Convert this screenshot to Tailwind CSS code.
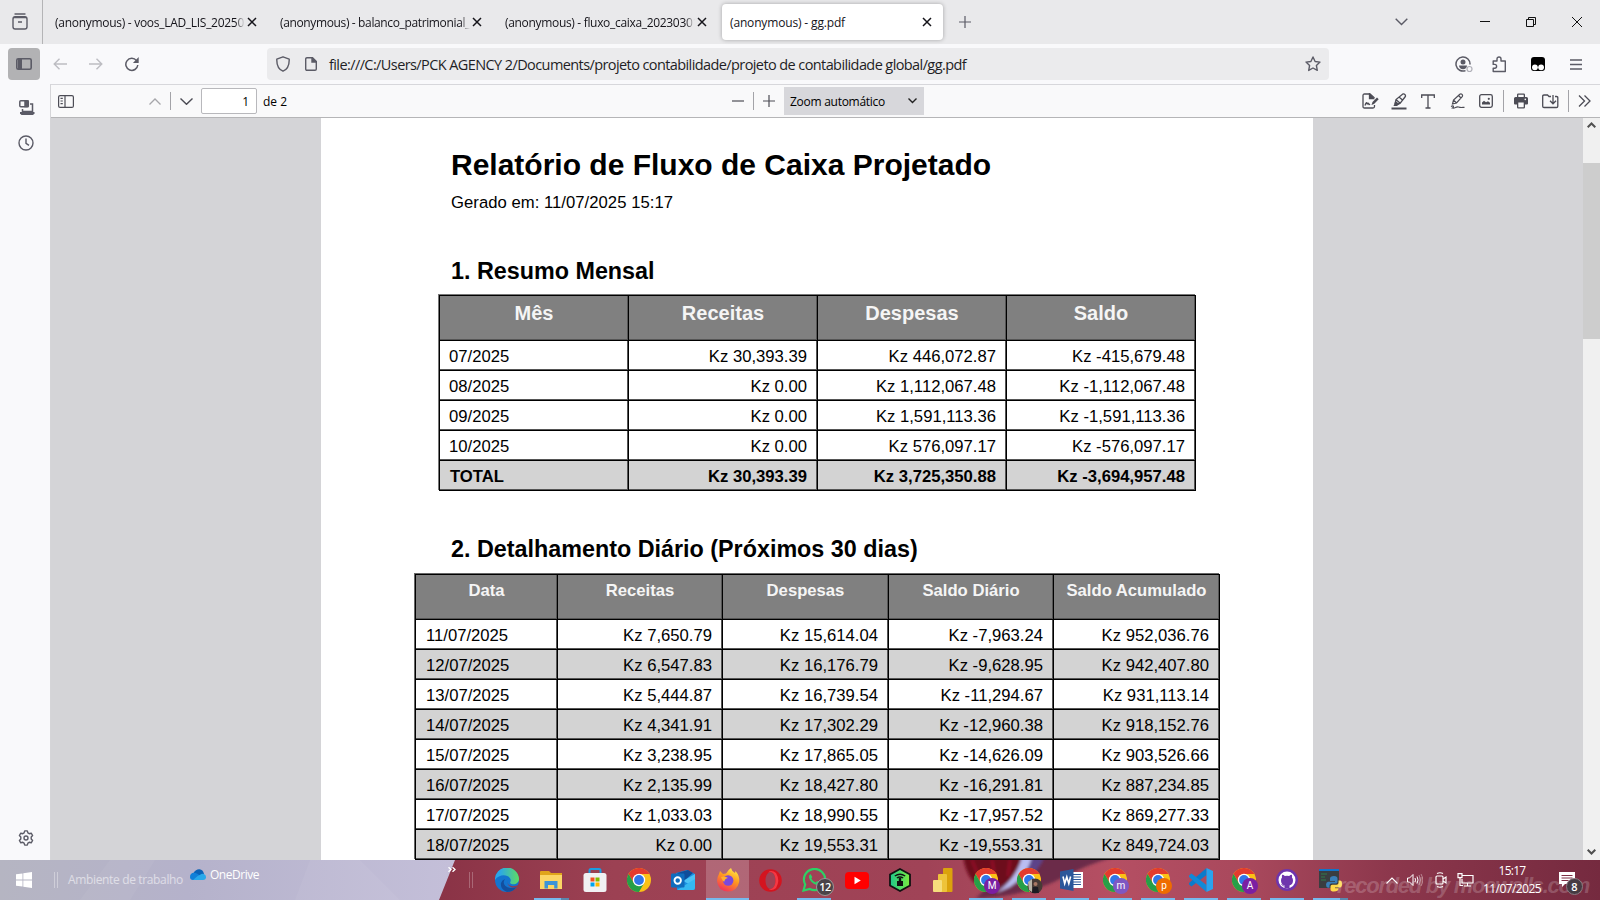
<!DOCTYPE html>
<html lang="pt">
<head>
<meta charset="utf-8">
<title>gg.pdf</title>
<script src="https://cdn.jsdelivr.net/npm/@tailwindcss/browser@4"></script>
</head>
<body class="w-[1600px] h-[900px] overflow-hidden flex flex-col bg-[#f9f9fb] text-[#15141a] font-['Open_Sans','Noto_Sans',sans-serif] text-[12px]">

<svg width="0" height="0" class="absolute">
  <symbol id="x" viewBox="0 0 10 10"><path d="M1 1l8 8M9 1l-8 8" fill="none" stroke="currentColor" stroke-width="1.5"/></symbol>
  <symbol id="chrome" viewBox="0 0 24 24">
    <circle cx="12" cy="12" r="12" fill="#fbc116"/>
    <path d="M12 6h10.4A12 12 0 0 0 1.6 6L6.8 15 12 12z" fill="#e33b2e"/>
    <path d="M1.6 6A12 12 0 0 0 12 24l5.2-9L12 12 6.8 15z" fill="#269f48"/>
    <circle cx="12" cy="12" r="6.2" fill="#fff"/><circle cx="12" cy="12" r="4.9" fill="#3076e8"/>
  </symbol>
</svg>

<!-- Tab strip -->
<header class="h-[44px] shrink-0 flex items-center bg-[#e9e9eb]">
  <div class="w-[43px] h-full shrink-0 border-r border-[#b4b4b6] flex items-center pl-[11px]">
    <svg width="18" height="18" viewBox="0 0 18 18" fill="none" stroke="#5b5b66" stroke-width="1.4"><path d="M4 1h10" stroke-linecap="round"/><rect x="2" y="3.8" width="14" height="12.2" rx="2.2"/><path d="M7 9h4M3 4.5h12"/></svg>
  </div>
  <div class="w-[225px] shrink-0 flex items-center pl-3">
    <div class="w-[190px] pt-[2px] overflow-hidden whitespace-nowrap mask-r-from-95%"><span data-fit="189">(anonymous) - voos_LAD_LIS_20250</span></div>
    <svg class="ml-[2px]" width="10" height="10"><use href="#x"/></svg>
  </div>
  <div class="w-[225px] shrink-0 flex items-center pl-3">
    <div class="w-[190px] pt-[2px] overflow-hidden whitespace-nowrap mask-r-from-95%"><span data-fit="190">(anonymous) - balanco_patrimonial_</span></div>
    <svg class="ml-[2px]" width="10" height="10"><use href="#x"/></svg>
  </div>
  <div class="w-[229px] shrink-0 flex items-center pl-3">
    <div class="w-[190px] pt-[2px] overflow-hidden whitespace-nowrap mask-r-from-95%"><span data-fit="194">(anonymous) - fluxo_caixa_20230301</span></div>
    <svg class="ml-[2px]" width="10" height="10"><use href="#x"/></svg>
  </div>
  <div class="w-[221px] h-[36px] shrink-0 flex items-center justify-between pl-2 pr-[11px] bg-white rounded shadow-[0_0_4px_rgba(0,0,0,0.3)]">
    <span data-fit="115" class="pt-[2px] whitespace-nowrap">(anonymous) - gg.pdf</span>
    <svg width="10" height="10"><use href="#x"/></svg>
  </div>
  <svg class="ml-[16px]" width="12" height="12" fill="none" stroke="#5b5b66" stroke-width="1.2"><path d="M6 0v12M0 6h12"/></svg>
  <div class="ml-auto flex items-center">
    <svg class="mr-[72px]" width="13" height="8" fill="none" stroke="#5b5b66" stroke-width="1.4"><path d="M.7.8l5.8 5.8L12.300.8"/></svg>
    <svg class="mr-[36px]" width="10" height="10" stroke="#111"><path d="M0 4.500h10"/></svg>
    <svg class="mr-[36px]" width="10" height="10" fill="none" stroke="#111"><path d="M.5 2.500h7v7h-7zM2.500 2.500v-2h7v7h-2"/></svg>
    <svg class="mr-[18px]" width="10" height="10" stroke="#111"><path d="M0 0l10 10M10 0L0 10"/></svg>
  </div>
</header>

<!-- Address bar -->
<nav class="h-[40px] shrink-0 flex items-center pl-2 text-[#5b5b66]">
  <div class="w-8 h-8 rounded bg-[#b2b2b4] flex items-center justify-center">
    <svg width="16" height="12" fill="none" stroke="currentColor" stroke-width="1.6"><rect x=".8" y=".8" width="14.400" height="10.400" rx="1.500"/><path d="M2 1h4v10H2z" fill="currentColor" stroke="none"/></svg>
  </div>
  <svg class="ml-[13px]" width="14" height="12" fill="none" stroke="#bdbdc2" stroke-width="1.4"><path d="M14 6H1M6.500.7L1.200 6l5.300 5.300"/></svg>
  <svg class="ml-[22px]" width="14" height="12" fill="none" stroke="#bdbdc2" stroke-width="1.4"><path d="M0 6h13M7.500.7L12.800 6 7.500 11.300"/></svg>
  <svg class="ml-[22px]" width="14" height="15" fill="none" stroke="currentColor" stroke-width="1.5"><path d="M12.800 8A6 6 0 1 1 11.500 3.600"/><path d="M13.700 0v6H7.900z" fill="currentColor" stroke="none"/></svg>
  <div class="ml-[128px] w-[1062px] h-8 rounded bg-[#ebebed] flex items-center pl-[9px]">
    <svg width="14" height="16" fill="none" stroke="currentColor" stroke-width="1.4"><path d="M7 .8l6.200 2.300C13.400 9 11 13.500 7 15.200 3 13.500.6 9 .8 3.100z" stroke-linejoin="round"/></svg>
    <svg class="ml-[15px]" width="12" height="14" fill="none" stroke="currentColor" stroke-width="1.400"><path d="M.7 2Q.7.7 2 .7h5.500l3.800 3.800V12q0 1.300-1.300 1.300H2Q.7 13.300.7 12z"/><path d="M7 .7V5h4.500z" fill="currentColor"/></svg>
    <span data-fit="637" class="ml-3 pt-[2px] text-[14.5px] text-[#1f1e25] whitespace-nowrap">file:///C:/Users/PCK AGENCY 2/Documents/projeto contabilidade/projeto de contabilidade global/gg.pdf</span>
    <svg class="ml-auto mr-2" width="16" height="16" viewBox="0 0 16 16" fill="none" stroke="currentColor" stroke-width="1.400" stroke-linejoin="round"><path d="M8 1l2.100 4.500 4.900.6-3.600 3.400.9 4.900L8 12l-4.300 2.400.9-4.900L1 6.100l4.900-.6z"/></svg>
  </div>
  <div class="ml-auto flex items-center pr-[18px]">
    <svg class="mr-[19px]" width="18" height="17" fill="none" stroke="currentColor" stroke-width="1.500"><path d="M10.500 14.600A7 7 0 1 1 15 8.500"/><circle cx="8" cy="6" r="2.500" fill="currentColor" stroke="none"/><path d="M4 9.500h8c0 2.400-1.800 3.700-4 3.700s-4-1.300-4-3.700z" fill="currentColor" stroke="none"/><circle cx="14.500" cy="13" r="2.500" stroke="#b0b0b8" stroke-width="1.200"/></svg>
    <svg class="mr-[24px]" width="15" height="17" fill="none" stroke="currentColor" stroke-width="1.400" stroke-linejoin="round"><path d="M1.200 5h3.800V3a2 2 0 0 1 4 0v2h4.300v10.500H1.200v-3.300h1.500a1.900 1.900 0 0 0 0-3.800H1.200z"/></svg>
    <svg class="mr-[25px]" width="14" height="14"><rect width="14" height="14" rx="3" fill="#000"/><circle cx="3.900" cy="10.300" r="2.900" fill="#fff"/><circle cx="10.100" cy="10.300" r="2.900" fill="#fff"/></svg>
    <svg width="12" height="11" stroke="currentColor" stroke-width="1.300"><path d="M0 1h12M0 5.500h12M0 10h12"/></svg>
  </div>
</nav>

<main class="h-[776px] shrink-0 flex">
  <!-- Sidebar rail -->
  <aside class="w-[50px] shrink-0 flex flex-col items-center pl-[2px] text-[#5b5b66]">
    <svg class="mt-[16px] ml-px" width="16" height="16" fill="none" stroke="currentColor" stroke-width="1.500"><rect x=".8" y=".8" width="8.500" height="6" rx="1"/><path d="M6 1h3v5.500H6z" fill="currentColor"/><path d="M11 4h2.500v7.500H3.500V9"/><path d="M1 12h14.500v1.500L14 15H2.500L1 13.500z" fill="currentColor" stroke="none"/></svg>
    <svg class="mt-[19px]" width="16" height="16" fill="none" stroke="currentColor" stroke-width="1.400"><circle cx="8" cy="8" r="7"/><path d="M8 3.500V8.300l3 2"/></svg>
    <svg class="mt-auto mb-[14px]" width="16" height="16" viewBox="0 0 16 16" fill="none" stroke="currentColor" stroke-width="1.400" stroke-linejoin="round"><path d="M6.700.9h2.600l.6 2 1.300.8 2-.5 1.400 2.300-1.400 1.500v2l1.400 1.500-1.400 2.300-2-.5-1.300.8-.6 2H6.700l-.6-2-1.300-.8-2 .5-1.400-2.300L2.800 9V7L1.400 5.500l1.400-2.300 2 .5 1.300-.8z"/><circle cx="8" cy="8" r="2"/></svg>
  </aside>

  <section class="w-[1550px] shrink-0 flex flex-col border-l border-[#d5d5d8]">
    <!-- PDF toolbar -->
    <div class="h-[34px] shrink-0 flex items-center bg-[#f9f9fa] border-y border-t-[#d7d7db] border-b-[#b5b5b7] text-[#4c4c55]">
      <svg class="ml-[7px]" width="16" height="13" fill="none" stroke="currentColor" stroke-width="1.200"><rect x=".6" y=".6" width="14.800" height="11.800" rx="1.500"/><path d="M7 .6v12M2.500 3.300h2.300M2.500 6h2.300M2.500 8.700h2.300"/></svg>
      <svg class="ml-[75px]" width="12" height="7" fill="none" stroke="#a6a6aa" stroke-width="1.300"><path d="M.5 6.500L6 1l5.500 5.500"/></svg>
      <div class="ml-[9px] w-px h-[18px] bg-[#a3a3a8]"></div>
      <svg class="ml-[9px]" width="13" height="7" fill="none" stroke="currentColor" stroke-width="1.400"><path d="M.5.500L6.500 6.300 12.500.500"/></svg>
      <div class="ml-[8px] w-[56px] h-[26px] bg-white border border-[#b8b8bc] rounded-[2px] flex items-center justify-end pt-px pr-[7px] text-black">1</div>
      <div class="ml-[6px] w-[26px] pt-px text-black whitespace-nowrap"><span data-fit="24">de 2</span></div>
      <svg class="ml-[443px]" width="12" height="2"><path d="M0 1h12" stroke="currentColor" stroke-width="1.200"/></svg>
      <div class="ml-[9px] w-px h-[18px] bg-[#a3a3a8]"></div>
      <svg class="ml-[9px]" width="12" height="12" stroke="currentColor" stroke-width="1.200"><path d="M6 0v12M0 6h12"/></svg>
      <div class="ml-[9px] w-[140px] h-[28px] bg-[#d7d7db] flex items-center justify-between pl-[6px] pr-[7px] text-black">
        <span data-fit="95" class="pt-px whitespace-nowrap">Zoom automático</span>
        <svg width="9" height="6" fill="none" stroke="#222" stroke-width="1.400"><path d="M.5.500l4 4 4-4"/></svg>
      </div>
      <div class="ml-auto flex items-center pr-[9px]">
        <svg class="mr-[12px]" width="17" height="16" fill="none" stroke="currentColor" stroke-width="1.300"><path d="M12.500 12v1.500q0 1.500-1.500 1.500H2.500Q1 15 1 13.500v-11Q1 1 2.500 1H8l4.500 4"/><path d="M7.500 1v4.500h4z" fill="currentColor"/><path d="M3 12.500c1-3 2-3.500 2-2s1-1 1.500 0 .5 1.500 1.500.5"/><path d="M9.500 12l1-3L15 4.500l1.700 1.700L12 11z" fill="currentColor" stroke="none"/></svg>
        <svg class="mr-[14px]" width="16" height="17" fill="none" stroke="currentColor" stroke-width="1.300"><path d="M4 11l1-4.500 6.500-5.300q1.500-.7 2.500.5t0 2.300L9 10.500 5 11.500M5.200 6.700l4 3.500M8 4l3.500 3"/><path d="M2.500 13l2-5 4 3-2.500 2z" fill="currentColor" stroke="none"/><path d="M.500 15.500h15" stroke-width="2"/></svg>
        <svg class="mr-[15px]" width="14" height="15" fill="none" stroke="currentColor" stroke-width="1.300"><path d="M.7 4V1h12.600v3M7 1v13M4.500 14h5"/></svg>
        <svg class="mr-[14px]" width="15" height="16" fill="none" stroke="currentColor" stroke-width="1.200"><path d="M2.500 11l1-4L9.800 1.200q1.200-.8 2.200.2t.2 2.200L6.500 10zM8.500 2.500L11 5M3.500 7l3 3"/><path d="M1 13.500c3-1.500 3 .5 1.500 1.500 3 .5 3-1.500 6-1 2 .8 3 .5 6 .3"/></svg>
        <svg class="mr-[10px]" width="14" height="14" fill="none" stroke="currentColor" stroke-width="1.300"><rect x=".7" y=".7" width="12.600" height="12.600" rx="1.800"/><path d="M3 10.500V8.500l2-1.800 2 1.500 2-1 2 1.500v1.800z" fill="currentColor" stroke="none"/><circle cx="9.800" cy="4.800" r="1.100" fill="currentColor" stroke="none"/></svg>
        <div class="mr-[10px] w-px h-[22px] bg-[#a3a3a8]"></div>
        <svg class="mr-[14px]" width="14" height="16"><path d="M3 4V1.800Q3 .5 4.300.500h5.400Q11 .5 11 1.800V4h1.500Q14 4 14 5.500v5q0 1-1 1h-2v2.700q0 1.300-1.300 1.300H4.300Q3 15.500 3 14.200v-2.700H1q-1 0-1-1v-5Q0 4 1.500 4z" fill="currentColor"/><path d="M4.300 4V1.800h5.400V4zM4.300 9.500h5.400v4.700H4.300z" fill="#f9f9fa"/><circle cx="11.300" cy="6.400" r=".8" fill="#f9f9fa"/></svg>
        <svg class="mr-[9px]" width="17" height="15" fill="none" stroke="currentColor" stroke-width="1.300"><path d="M9 2.500H7L5.500 1H2Q.7 1 .7 2.300v9.900Q.7 13.500 2 13.500h12.500q1.300 0 1.300-1.300V3.800q0-1.300-1.300-1.300H13M11 1v8.500M8 6.800l3 3 3-3" /></svg>
        <div class="mr-[9px] w-px h-[22px] bg-[#a3a3a8]"></div>
        <svg width="13" height="12" fill="none" stroke="currentColor" stroke-width="1.300"><path d="M1 .500L6.500 6 1 11.500M6.500.500L12 6l-5.500 5.500"/></svg>
      </div>
    </div>

    <!-- Document viewport -->
    <div class="h-[742px] flex bg-[#d4d4d7]">
      <article class="ml-[270px] w-[992px] h-full overflow-hidden bg-white text-black font-['Liberation_Sans',Arial,sans-serif]">
        <div class="pl-[130px]">
          <h1 class="pt-[27px] h-[69px] text-[30px] leading-[40px] font-bold whitespace-nowrap">Relatório de Fluxo de Caixa Projetado</h1>
          <p class="pt-[6px] h-[68px] text-[16.67px] leading-[20px]"><span data-fit="222">Gerado em: 11/07/2025 15:17</span></p>
          <h2 class="h-[40px] pt-[1px] text-[23.33px] leading-[30px] font-bold">1. Resumo Mensal</h2>
        </div>
        <div id="t1" class="ml-[118px] w-[757px] h-[196px] grid grid-cols-[189px_189px_189px_189px] content-start border-l border-t border-black shadow-[-1px_-1px_0_#777] text-[16.67px]"></div>
        <h2 class="pl-[130px] mt-[43px] h-[40px] text-[23.33px] leading-[30px] font-bold">2. Detalhamento Diário (Próximos 30 dias)</h2>
        <div id="t2" class="ml-[94px] w-[805px] grid grid-cols-[142px_165px_166px_165px_166px] border-l border-t border-black shadow-[-1px_-1px_0_#666] text-[16.67px]"></div>
      </article>
      <div class="ml-auto w-[17px] h-full bg-[#f0f0f0] flex flex-col items-center">
        <svg class="mt-[4px]" width="9" height="6" fill="none" stroke="#505050" stroke-width="2"><path d="M.7 5.300l3.800-3.800 3.800 3.800"/></svg>
        <div class="mt-[35px] w-full h-[176px] bg-[#cdcdcd]"></div>
        <svg class="mt-auto mb-[5px]" width="9" height="6" fill="none" stroke="#505050" stroke-width="2"><path d="M.7.700l3.800 3.800L8.300.700"/></svg>
      </div>
    </div>
  </section>
</main>

<!-- Taskbar -->
<footer class="relative h-[40px] shrink-0 overflow-hidden flex text-white">
  <svg class="absolute inset-0 -z-10" width="1600" height="40" preserveAspectRatio="none">
    <defs>
      <linearGradient id="l"><stop offset="0" stop-color="#b5b5c2"/><stop offset=".4" stop-color="#b5b2cb"/><stop offset="1" stop-color="#c5c0da"/></linearGradient>
      <linearGradient id="r"><stop offset="0" stop-color="#8a3346"/><stop offset=".15" stop-color="#9c4153"/><stop offset=".42" stop-color="#a04357"/><stop offset=".58" stop-color="#b54f63"/><stop offset=".7" stop-color="#a8485c"/><stop offset=".82" stop-color="#8c374c"/><stop offset="1" stop-color="#752a3f"/></linearGradient>
      <filter id="b" x="-20%" y="-50%" width="140%" height="200%"><feGaussianBlur stdDeviation="1.5"/></filter>
    </defs>
    <rect width="470" height="40" fill="url(#l)"/>
    <path d="M110 0h45l-25 40H80zM310 0h50l40 40H295z" fill="#fff" opacity=".05"/>
    <path d="M455 0H1600V40H439z" fill="url(#r)"/>
    <g filter="url(#b)">
      <path d="M1020 -4h98c-30 8-44 16-60 24s-50 18-82 18z" fill="#5f2444" opacity=".85"/>
      <path d="M963 -4h62q-2 24-36 34-22-4-26-34z" fill="#6d0a1e"/>
      <path d="M972 0l8 20M992 0l4 24M1010 0l-2 16" stroke="#b01030" stroke-width="2" opacity=".7"/>
      <path d="M1022 -3h10q-4 18-22 30l-14 6q20-14 26-36z" fill="#b9bdf2"/>
      <path d="M1032 -3h12q-4 12-16 20l-12 8q12-12 16-28z" fill="#5b4a9a" opacity=".8"/>
    </g>
  </svg>

  <div class="w-[485px] shrink-0 h-full flex">
    <div class="w-[48px] shrink-0 flex items-center justify-center"><svg width="16" height="16" fill="#fff"><path d="M0 2.300l6.500-.9v6.200H0zM7.300 1.300L16 0v7.600H7.300zM0 8.400h6.500v6.200L0 13.700zM7.300 8.400H16V16l-8.700-1.300z"/></svg></div>
    <div class="ml-[6px] mt-[12px] w-[4px] h-[16px] border-x border-white/35"></div>
    <div class="ml-[10px] mt-[11px] w-[122px] shrink-0 whitespace-nowrap text-white/55"><span data-fit="115">Ambiente de trabalho</span></div>
    <svg class="mt-[9px] shrink-0" width="16" height="11"><path d="M3.500 4Q6 0 9.500.3T14 5l-4 4z" fill="#0a63b8"/><path d="M0 8q0-4 4-4.200 3 .2 7 4L6 11H3Q0 10.800 0 8z" fill="#1180d8"/><path d="M3 11q4-4.500 9-6.300 4 .3 4 3.500 0 2.500-3 2.800z" fill="#28a8ea"/></svg>
    <div class="ml-[4px] mt-[6px] w-[54px] shrink-0 whitespace-nowrap"><span data-fit="49">OneDrive</span></div>
    <svg class="ml-auto mt-[7px] shrink-0" width="8" height="5" fill="none" stroke="#fff" stroke-width="1.300"><path d="M.5.200l2.500 2.300L.500 4.800M4.500.200L7 2.500 4.500 4.800"/></svg>
    <div class="ml-[13px] mr-[12px] mt-[12px] w-[4px] h-[16px] shrink-0 border-x border-white/25"></div>
  </div>

  <div id="apps" class="h-full flex shrink-0">
    <div class="w-[44px] flex items-center justify-center"><svg width="24" height="24"><defs><linearGradient id="e1"><stop offset=".2" stop-color="#2ba7e8"/><stop offset="1" stop-color="#5fdc62"/></linearGradient></defs><circle cx="12" cy="12" r="12" fill="#1374cf"/><path d="M0 12A12 12 0 0 1 24 11c0 4-4 6-7.500 5-3-1 0-2-1-5C13 6 4 6 0 12z" fill="url(#e1)"/><path d="M10 11c-4 5 2 12 12 7.500Q18 24 12 24 5 21 6 15q1-3 4-4z" fill="#134f9e"/><path d="M13 12.500c-2 5 5 7.500 11 4l-2 2.500c-5 2-11-1-9-6.500z" fill="#8f3b52"/></svg></div>
    <div class="w-[44px] flex items-center justify-center relative"><svg width="22" height="20"><path d="M0 2q0-1 1-1h8l2 2h11v15H0z" fill="#e0a51b"/><path d="M0 5h22v14H0z" fill="#fbd665"/><path d="M4.500 18.500V11h13v7.500h-3.300V15H8v3.500z" fill="#3b93d8"/></svg><div class="absolute bottom-0 left-[5px] w-[35px] h-[2px] bg-[#76b9ed] border-r-8 border-[#5a87ad]"></div></div>
    <div class="w-[44px] flex items-center justify-center"><svg width="24" height="24"><path d="M6.500 6V2.500Q6.500 1 8 1h8q1.500 0 1.500 1.500V6" fill="none" stroke="#1b9de2" stroke-width="2"/><rect x=".5" y="5" width="23" height="19" rx="2.500" fill="#f1f1f3"/><path d="M7.500 9.500h4v4h-4z" fill="#f25022"/><path d="M12.500 9.500h4v4h-4z" fill="#7fba00"/><path d="M7.500 14.500h4v4h-4z" fill="#00a4ef"/><path d="M12.500 14.500h4v4h-4z" fill="#ffb900"/></svg></div>
    <div class="w-[44px] flex items-center justify-center"><svg width="24" height="24"><use href="#chrome"/></svg></div>
    <div class="w-[44px] flex items-center justify-center"><svg width="24" height="22"><path d="M5 4L16 1l8 4v14q0 2-2 2H6z" fill="#1a8fe0"/><path d="M6 4l11-3 5 3-9 8z" fill="#0f4d9a"/><path d="M24 5v13L12 12z" fill="#4cc2f5"/><path d="M6 21l18-11v9q0 2-2 2z" fill="#35b8f1"/><rect y="4.500" width="13.500" height="14" rx="1.200" fill="#0f6cbd"/><circle cx="6.700" cy="11.500" r="3.200" fill="none" stroke="#fff" stroke-width="1.900"/></svg></div>
    <div class="ml-px w-[43px] flex items-center justify-center relative bg-white/20"><svg width="24" height="24"><defs><linearGradient id="f1" x1=".8" y1="0" x2=".3" y2="1"><stop offset="0" stop-color="#fff04a"/><stop offset=".45" stop-color="#ff9a1f"/><stop offset="1" stop-color="#f2305a"/></linearGradient></defs><path d="M3 6l1-3 3 3 3-.5Q12 2 15 0q.5 3 4 5l.5-2Q24 8 23.200 14 21 23.500 12 23.500 2 23 1 13q0-4 2-7z" fill="url(#f1)"/><circle cx="12.200" cy="12.500" r="5.200" fill="#7b48dc"/><path d="M5 9q4-1.500 7 1-3.500.5-3.500 3.500Q7 14 5 9z" fill="#ffb12e"/></svg><div class="absolute bottom-0 left-0 w-full h-[2px] bg-[#76b9ed]"></div></div>
    <div class="w-[43px] flex items-center justify-center"><svg width="23" height="23"><path fill-rule="evenodd" d="M11.500.2a11.300 11.300 0 1 0 0 22.600 11.300 11.300 0 0 0 0-22.600zM11.500 3c2.800 0 5 3.800 5 8.500s-2.200 8.500-5 8.500-5-3.800-5-8.500S8.700 3 11.500 3z" fill="#d4141f"/><path d="M9 3.500Q12.500.5 17 4q4.500 7.500 0 15-4.500 3.500-8 .5 1.200.7 2.500.5c2.800 0 5-3.800 5-8.500S14.300 3 11.500 3Q10 3 9 3.500z" fill="#f53844"/></svg></div>
    <div class="w-[43px] flex items-center justify-center relative"><svg width="24" height="24"><path d="M1.500 22.500l1.700-6A10.600 10.600 0 1 1 7.800 21z" fill="none" stroke="#2bd265" stroke-width="2.200"/><path d="M8.500 6q-2 1-1.500 3.500 1.500 5.500 7.500 7.500 3 .5 3.500-2.500l-3-1.500-1.200 1.400q-3-1-4.500-4l1-1.400z" fill="#2bd265"/></svg><div class="absolute left-[24px] top-[18px] w-[18px] h-[18px] rounded-full bg-[#4a4248] border border-[#999] text-[11px] leading-[16px] text-center font-semibold tracking-tighter">12</div><div class="absolute bottom-0 left-[5px] w-[34px] h-[2px] bg-[#76b9ed]"></div></div>
    <div class="w-[43px] flex items-center justify-center"><svg width="24" height="17"><rect width="24" height="17" rx="4" fill="#f00"/><path d="M9.500 4.800l6.300 3.700-6.300 3.700z" fill="#fff"/></svg></div>
    <div class="w-[43px] flex items-center justify-center"><svg width="24" height="24"><defs><linearGradient id="g1"><stop offset="0" stop-color="#1ec98b"/><stop offset="1" stop-color="#7bea3e"/></linearGradient></defs><path d="M12 1l10 5.500v11L12 23 2 17.500v-11z" fill="url(#g1)" stroke="#111" stroke-width="1.800"/><path d="M9 13h6v5H9zM10.800 10h2.400v4h-2.400z" fill="#111"/><path d="M6.800 8q5.200-3.500 10.400 0M8.800 10q3.200-2 6.400 0" fill="none" stroke="#111" stroke-width="1.300"/></svg></div>
    <div class="w-[43px] flex items-center justify-center"><svg width="20" height="24"><rect x="10" width="9.500" height="24" rx="1" fill="#dba20c"/><rect x="5" y="6" width="9" height="18" rx="1" fill="#eec33a"/><rect y="12" width="9" height="12" rx="1" fill="#f6dd7c"/></svg></div>
    <div class="w-[43px] flex items-center justify-center relative"><svg width="24" height="24"><use href="#chrome"/></svg><div class="absolute left-[20px] top-[18px] w-[16px] h-[16px] rounded-full bg-[#7b1fa2] font-['Roboto'] text-[10px] leading-[16px] text-center">M</div><div class="absolute bottom-0 left-[5px] w-[34px] h-[2px] bg-[#76b9ed]"></div></div>
    <div class="w-[43px] flex items-center justify-center relative"><svg width="24" height="24"><use href="#chrome"/></svg><svg class="absolute left-[20px] top-[18px]" width="16" height="16"><circle cx="8" cy="8" r="7.500" fill="#473b36"/><path d="M1 4l4-3v13l-3-2z" fill="#b8b4a8"/><circle cx="8.500" cy="6" r="2" fill="#a87864"/><path d="M6 9h5l1 6H5z" fill="#1c1c22"/></svg><div class="absolute bottom-0 left-[5px] w-[34px] h-[2px] bg-[#76b9ed]"></div></div>
    <div class="w-[43px] flex items-center justify-center relative"><svg width="23" height="22"><path d="M12 3h11v16H12z" fill="#fff"/><path d="M13 5.500h8M13 8h8M13 10.500h8M13 13h8M13 15.500h8" stroke="#2b579a"/><path d="M0 2.500L13.500 0v22L0 19.500z" fill="#2b579a"/><path d="M3 7.500l1.700 7L6.800 8l2 6.500 1.800-7" fill="none" stroke="#fff" stroke-width="1.600"/></svg><div class="absolute bottom-0 left-[5px] w-[34px] h-[2px] bg-[#76b9ed]"></div></div>
    <div class="w-[43px] flex items-center justify-center relative"><svg width="24" height="24"><use href="#chrome"/></svg><div class="absolute left-[20px] top-[18px] w-[16px] h-[16px] rounded-full bg-[#7e57c2] font-['Roboto'] text-[10px] leading-[15px] text-center">m</div><div class="absolute bottom-0 left-[5px] w-[34px] h-[2px] bg-[#76b9ed]"></div></div>
    <div class="w-[43px] flex items-center justify-center relative"><svg width="24" height="24"><use href="#chrome"/></svg><div class="absolute left-[20px] top-[18px] w-[16px] h-[16px] rounded-full bg-[#ef6c00] font-['Roboto'] text-[10px] leading-[15px] text-center">p</div><div class="absolute bottom-0 left-[5px] w-[34px] h-[2px] bg-[#76b9ed]"></div></div>
    <div class="w-[43px] flex items-center justify-center relative"><svg width="24" height="24"><path d="M17.500 0v7L2.500 18.500 0 16.500v-1.500z" fill="#0a7bcb"/><path d="M17.500 24v-7L2.500 5.500 0 7.500V9z" fill="#1189d8"/><path d="M17.500 0L24 3v18l-6.500 3z" fill="#29a3ee"/></svg><div class="absolute bottom-0 left-[5px] w-[34px] h-[2px] bg-[#76b9ed]"></div></div>
    <div class="w-[43px] flex items-center justify-center relative"><svg width="24" height="24"><use href="#chrome"/></svg><div class="absolute left-[20px] top-[18px] w-[16px] h-[16px] rounded-full bg-[#7b1fa2] font-['Roboto'] text-[10px] leading-[16px] text-center">A</div><div class="absolute bottom-0 left-[5px] w-[34px] h-[2px] bg-[#76b9ed]"></div></div>
    <div class="w-[43px] flex items-center justify-center relative"><svg width="22" height="22"><circle cx="11" cy="11" r="11" fill="#6e35ad"/><circle cx="11" cy="11" r="8.500" fill="#fff"/><path d="M8.500 19.500v-3Q5 15.500 5 11.500q0-2 1-3-.3-1.500.2-2.700 1.500.1 2.600 1.100 2.200-.5 4.400 0 1.100-1 2.600-1.100.5 1.200.2 2.700 1 1 1 3 0 4-3.500 5v3z" fill="#6e35ad"/><path d="M5.500 15.500q1.500.3 2.500 2" stroke="#6e35ad" fill="none"/></svg><div class="absolute bottom-0 left-[5px] w-[34px] h-[2px] bg-[#76b9ed]"></div></div>
    <div class="w-[43px] flex items-center justify-center relative"><svg width="24" height="24"><path d="M1 2h20v18H1z" fill="#3a3d40"/><path d="M1 1h20v2H1z" fill="#1273c8"/><path d="M3 6h6M3 9h4M3 12h5" stroke="#2f7d4a"/><path d="M16 8q-4 0-4 2.500V13h5v.7H10q-2 .3-2 3t2 3h1.500v-2.200q0-2 2-2h4.500q1.500 0 1.500-1.700v-3Q19.500 8 16 8z" fill="#3a7fb8"/><path d="M16 23.500q-3.500 0-3.500-2v-3q0-1.800 1.800-1.800h4.200q2 0 2-2V12.500H22q2 .3 2 3.500t-2 3.500h-5v.7h3.500q0 3.300-4.500 3.300z" fill="#ffd94a"/></svg><div class="absolute bottom-0 left-[5px] w-[35px] h-[2px] bg-[#76b9ed] border-r-8 border-[#5a87ad]"></div></div>
  </div>

  <div class="absolute left-[1337px] top-[11px] text-[22px] leading-[30px] font-bold italic font-['Liberation_Sans'] text-white/20 whitespace-nowrap" data-fit="252">recorded by moewalls.com</div>

  <div class="relative ml-auto h-full flex items-center shrink-0">
    <svg class="mr-[9px]" width="12" height="7" fill="none" stroke="#fff" stroke-width="1.200"><path d="M.5 6.500L6 1l5.500 5.500"/></svg>
    <svg class="mr-[12px]" width="16" height="14" fill="none" stroke="#fff"><path d="M.5 5h2L6 1.500v11L2.500 9h-2z"/><path d="M8 5q1 2 0 4M10 3.500q2 3.500 0 7"/><path d="M12 2q3 5 0 10M14 1q3.500 6 0 12" opacity=".4"/></svg>
    <svg class="mr-[10px]" width="12" height="16" fill="none" stroke="#fff" stroke-width="1.200"><rect x="1" y="4" width="7" height="8" rx="1"/><path d="M8 7l3-2v6L8 9M2 1.500q3-1.500 6 0M2 14.500q3 1.500 6 0"/></svg>
    <svg class="mr-[9px]" width="17" height="14" fill="none" stroke="#fff" stroke-width="1.200"><path d="M5 2.500h11v7.500H5V6M10.500 10v3M7 13h7M1 .700h4v4H1zM3 5v7.500h3"/></svg>
    <div class="w-[58px] text-center whitespace-nowrap leading-[18px]"><div><span data-fit="27">15:17</span></div><div><span data-fit="58">11/07/2025</span></div></div>
    <div class="relative ml-[18px] w-[41px] h-[40px]"><svg class="absolute left-0 top-[12px]" width="16" height="15"><path d="M0 0h16v12H6l-3 3v-3H0z" fill="#fff"/><path d="M2.500 3.500h11M2.500 6h11M2.500 8.500h7" stroke="#7d2f44"/></svg><div class="absolute left-[7px] top-[18px] w-[17px] h-[17px] rounded-full bg-[#453b42] border border-[#8a7a82] text-[11px] leading-[15px] text-center font-semibold">8</div></div>
  </div>
</footer>

<script>
const monthly = [
  ['07/2025','Kz 30,393.39','Kz 446,072.87','Kz -415,679.48'],
  ['08/2025','Kz 0.00','Kz 1,112,067.48','Kz -1,112,067.48'],
  ['09/2025','Kz 0.00','Kz 1,591,113.36','Kz -1,591,113.36'],
  ['10/2025','Kz 0.00','Kz 576,097.17','Kz -576,097.17'],
  ['TOTAL','Kz 30,393.39','Kz 3,725,350.88','Kz -3,694,957.48']];
const daily = [
  ['11/07/2025','Kz 7,650.79','Kz 15,614.04','Kz -7,963.24','Kz 952,036.76'],
  ['12/07/2025','Kz 6,547.83','Kz 16,176.79','Kz -9,628.95','Kz 942,407.80'],
  ['13/07/2025','Kz 5,444.87','Kz 16,739.54','Kz -11,294.67','Kz 931,113.14'],
  ['14/07/2025','Kz 4,341.91','Kz 17,302.29','Kz -12,960.38','Kz 918,152.76'],
  ['15/07/2025','Kz 3,238.95','Kz 17,865.05','Kz -14,626.09','Kz 903,526.66'],
  ['16/07/2025','Kz 2,135.99','Kz 18,427.80','Kz -16,291.81','Kz 887,234.85'],
  ['17/07/2025','Kz 1,033.03','Kz 18,990.55','Kz -17,957.52','Kz 869,277.33'],
  ['18/07/2025','Kz 0.00','Kz 19,553.31','Kz -19,553.31','Kz 849,724.03']];
const edge = 'border-r border-b border-black shadow-[inset_-1px_-1px_0_#555] whitespace-nowrap ';
const cell = (t, c) => `<div class="${edge}${c}">${t}</div>`;
const row = (r, c, first) => r.map((t, i) => cell(t, c + (i ? ' text-right pr-[10px]' : first))).join('');
document.getElementById('t1').innerHTML =
  ['Mês','Receitas','Despesas','Saldo'].map(t => cell(t, 'h-[45px] bg-[#808080] text-[#f5f5f5] text-center font-bold text-[20px] leading-[35px]')).join('') +
  monthly.map((r, i) => row(r, i == 4 ? 'h-[30px] leading-[31px] bg-[#d3d3d3] font-bold' : 'h-[30px] leading-[31px] bg-white', i == 4 ? ' pl-[10px]' : ' pl-[9px]')).join('');
document.getElementById('t2').innerHTML =
  ['Data','Receitas','Despesas','Saldo Diário','Saldo Acumulado'].map(t => cell(t, 'h-[45px] bg-[#808080] text-[#f5f5f5] text-center font-bold leading-[32px]')).join('') +
  daily.map((r, i) => row(r, i % 2 ? 'h-[30px] leading-[32px] bg-[#d3d3d3]' : 'h-[30px] leading-[32px] bg-white', ' pl-[10px]')).join('');
// Tracks each label so that it fills its nominal width.
function fit() {
  document.querySelectorAll('[data-fit]').forEach(e => {
    e.style.letterSpacing = '0px';
    const r = document.createRange(); r.selectNodeContents(e);
    e.style.letterSpacing = (e.dataset.fit - r.getBoundingClientRect().width) / e.textContent.length + 'px';
  });
}
fit();
addEventListener('load', () => { fit(); requestAnimationFrame(fit); setTimeout(fit, 100); });
document.fonts.ready.then(fit);
</script>
</body>
</html>
